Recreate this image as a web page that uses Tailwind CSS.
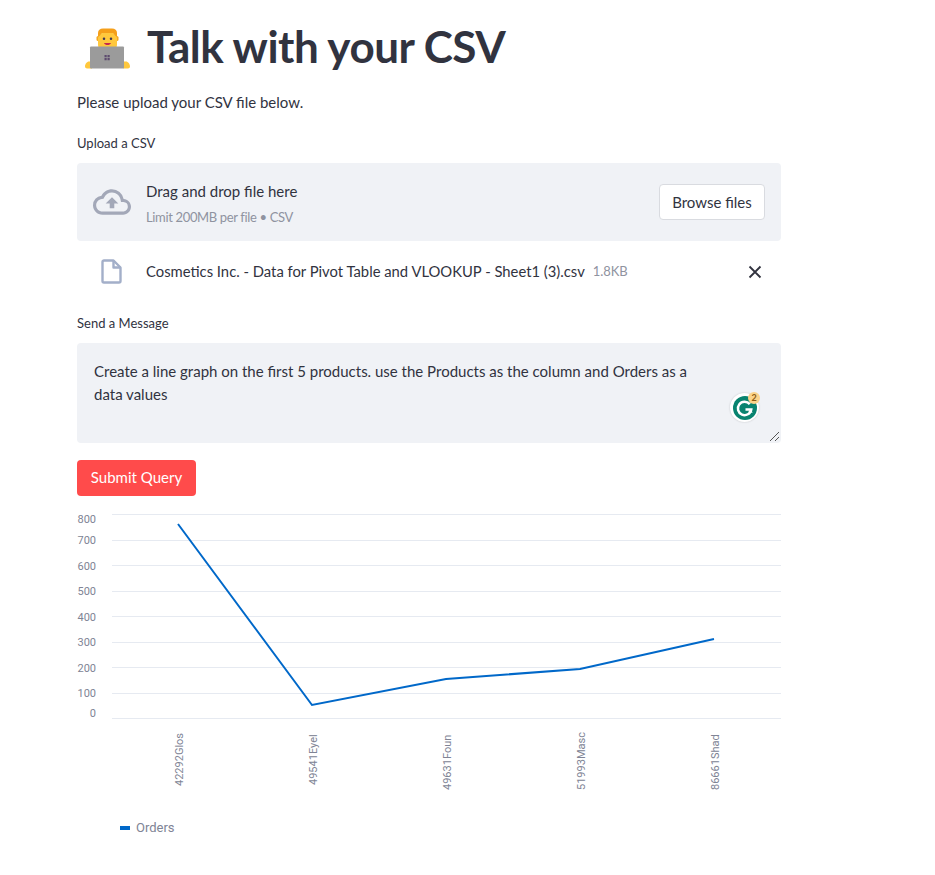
<!DOCTYPE html>
<html lang="en">
<head>
    <meta charset="UTF-8">
    <title>Talk with your CSV</title>
    <script src="https://cdn.jsdelivr.net/npm/@tailwindcss/browser@4"></script>
</head>
<body class="bg-white text-[#31333f] font-['Lato','Noto_Sans',sans-serif]">
    <div class="w-[935px] h-[875px] overflow-hidden pl-[77px]">
        <div class="w-[704px]">
            <!-- Title -->
            <div class="flex items-center h-[94px] pb-[2px] gap-[17px]">
                <svg class="ml-[8px] w-[45px] h-[45px]" viewBox="0 0 45 45">
                    <path d="M0 42.500c0-2.500 2-5 4-5h3v7H2c-1 0-2-1-2-2zM45 42.500c0-2.500-2-5-4-5h-3v7h5c1 0 2-1 2-2z" fill="#ffc83d"/>
                    <rect x="11.500" y="12" width="3" height="5" rx="1.500" fill="#f5a623"/>
                    <rect x="30.500" y="12" width="3" height="5" rx="1.500" fill="#f5a623"/>
                    <rect x="13" y="9" width="19" height="17" rx="5" fill="#ffc83d"/>
                    <path d="M13 13V9c0-3 2-4.500 5-4.500h9c3 0 5 1.500 5 4.500v4l-2-1.500c-1-2-2-2.500-3-2.500h-9c-1 0-2 .5-3 2.500z" fill="#f59f1a"/>
                    <rect x="17.800" y="13.500" width="2.400" height="2.400" rx="1" fill="#433b53"/>
                    <rect x="24.800" y="13.500" width="2.400" height="2.400" rx="1" fill="#433b53"/>
                    <path d="M19 19h7c-.5 1.500-2 2-3.500 2S19.500 20.500 19 19z" fill="#c62a4e"/>
                    <rect x="5" y="22.500" width="34" height="22" rx="1" fill="#9b9b9b"/>
                    <path d="M19.500 31h2.200v2.200h-2.200zM22.500 31h2.200v2.200h-2.200zM19.500 34h2.200v2.200h-2.200zM22.500 34h2.200v2.200h-2.200z" fill="#5d4b6e"/>
                </svg>
                <h1 class="text-[44px] font-bold leading-none tracking-[-0.5px] whitespace-nowrap">Talk with your CSV</h1>
            </div>

            <p class="text-[15px] leading-[24px] h-[24px] -mt-[4px]">Please upload your CSV file below.</p>

            <!-- Uploader -->
            <label class="block mt-[19px] text-[13px] leading-[20px] h-[20px]">Upload a CSV</label>
            <div class="mt-[10px] h-[78px] bg-[#f0f2f6] rounded-[4px] flex items-center pl-[16px] pr-[16px]">
                <svg class="w-[38px] h-[38px] text-[#a3a8b8]" viewBox="0 0 24 24" fill="currentColor">
                    <path d="M19.350 10.040A7.490 7.490 0 0 0 12 4C9.110 4 6.600 5.640 5.350 8.040A5.994 5.994 0 0 0 0 14c0 3.310 2.690 6 6 6h13c2.760 0 5-2.240 5-5 0-2.640-2.050-4.780-4.650-4.960zM19 18H6c-2.210 0-4-1.790-4-4 0-2.050 1.530-3.760 3.560-3.970l1.070-.11.500-.95A5.469 5.469 0 0 1 12 6c2.620 0 4.880 1.860 5.390 4.430l.300 1.500 1.530.11A2.980 2.980 0 0 1 22 15c0 1.650-1.350 3-3 3zM8 13h2.550v3h2.900v-3H16l-4-4z"/>
                </svg>
                <div class="ml-[15px] flex-1 pt-[2px]">
                    <div class="text-[15px] leading-[24px]">Drag and drop file here</div>
                    <div class="text-[13px] tracking-[-0.35px] leading-[20px] mt-[4px] text-[#8f93a0]">Limit 200MB per file • CSV</div>
                </div>
                <button class="w-[106px] h-[36px] bg-white border border-[#d9dbe0] rounded-[4px] text-[15px]">Browse files</button>
            </div>

            <!-- Uploaded file -->
            <div class="h-[61px] flex items-center pl-[24px]">
                <svg class="w-[21px] h-[25px] text-[#a3afc9]" viewBox="0 0 21 25" fill="none" stroke="currentColor" stroke-width="2.400" stroke-linejoin="round">
                    <path d="M3 1.500h9.500l7 7V22a1.500 1.500 0 0 1-1.500 1.500H3A1.500 1.500 0 0 1 1.500 22V3A1.500 1.500 0 0 1 3 1.500z"/>
                    <path d="M12.500 1.500v7h7"/>
                </svg>
                <span class="ml-[24px] text-[14.800px] whitespace-nowrap">Cosmetics Inc. - Data for Pivot Table and VLOOKUP - Sheet1 (3).csv</span>
                <span class="ml-[8px] text-[13px] tracking-[-0.1px] text-[#8f93a0]">1.8KB</span>
                <svg class="ml-auto mr-[19px] w-[14px] h-[14px]" viewBox="0 0 14 14" stroke="#31333f" stroke-width="1.800" fill="none">
                    <path d="M1.500 1.500l11 11M12.500 1.500l-11 11"/>
                </svg>
            </div>

            <!-- Message -->
            <label class="block mt-[11px] text-[13px] leading-[20px] h-[20px]">Send a Message</label>
            <div class="relative mt-[10px] h-[100px] bg-[#f0f2f6] rounded-[4px] pl-[17px] pr-[80px] pt-[17px] text-[15px] leading-[23px]">
                Create a line graph on the first 5 products. use the Products as the column and Orders as a data values
                <div class="absolute left-[653px] top-[50px] w-[29px] h-[29px] rounded-full bg-white flex items-center justify-center shadow-[0_0_2px_rgba(0,0,0,0.2)]">
                    <svg class="w-[24px] h-[24px]" viewBox="0 0 25 25">
                        <circle cx="12.500" cy="12.500" r="12.500" fill="#08836f"/>
                        <path d="M17.500 8.500A7 7 0 1 0 19 14h-6" fill="none" stroke="#fff" stroke-width="2.600"/>
                        <path d="M15.500 17l3-3 2 3.500z" fill="#fff"/>
                    </svg>
                </div>
                <div class="absolute left-[671px] top-[49px] w-[12px] h-[12px] rounded-full bg-[#fbd38a] text-[9px] leading-[12px] text-center font-bold text-[#8a5a10]">2</div>
                <svg class="absolute right-[1px] bottom-[1px] w-[12px] h-[12px]" viewBox="0 0 12 12" stroke="#555" stroke-width="1" fill="none">
                    <path d="M2 11L11 2M7 11L11 7"/>
                </svg>
            </div>

            <!-- Button -->
            <button class="block mt-[17px] w-[119px] h-[36px] pb-[2px] bg-[#ff4b4b] rounded-[4px] text-white text-[15px]">Submit Query</button>

            <!-- Chart -->
            <svg class="block mt-[4px] -ml-[77px] font-['Roboto',sans-serif]" width="935" height="340" viewBox="0 500 935 340">
                <g stroke="#e6eaf1" stroke-width="1">
                    <path d="M112 514.500H781M112 540.500H781M112 565.500H781M112 591.500H781M112 616.500H781M112 642.500H781M112 667.500H781M112 693.500H781M112 718.500H781"/>
                </g>
                <g fill="#808495" font-size="11" text-anchor="end">
                    <text x="96" y="523">800</text>
                    <text x="96" y="544">700</text>
                    <text x="96" y="570">600</text>
                    <text x="96" y="595">500</text>
                    <text x="96" y="621">400</text>
                    <text x="96" y="646">300</text>
                    <text x="96" y="672">200</text>
                    <text x="96" y="697">100</text>
                    <text x="96" y="717">0</text>
                </g>
                <polyline points="178,524 312,705 446,679 580,669 714,639" fill="none" stroke="#0068c9" stroke-width="2"/>
                <g fill="#808495" font-size="11" text-anchor="start">
                    <text transform="translate(183,786) rotate(-90)">42292Glos</text>
                    <text transform="translate(317,785) rotate(-90)">49541Eyel</text>
                    <text transform="translate(451,790) rotate(-90)">49631Foun</text>
                    <text transform="translate(585,790) rotate(-90)">51993Masc</text>
                    <text transform="translate(719,790) rotate(-90)">86661Shad</text>
                </g>
                <rect x="120" y="826" width="10" height="4" fill="#0068c9"/>
                <text x="136" y="832" fill="#808495" font-size="13">Orders</text>
            </svg>
        </div>
    </div>
</body>
</html>
